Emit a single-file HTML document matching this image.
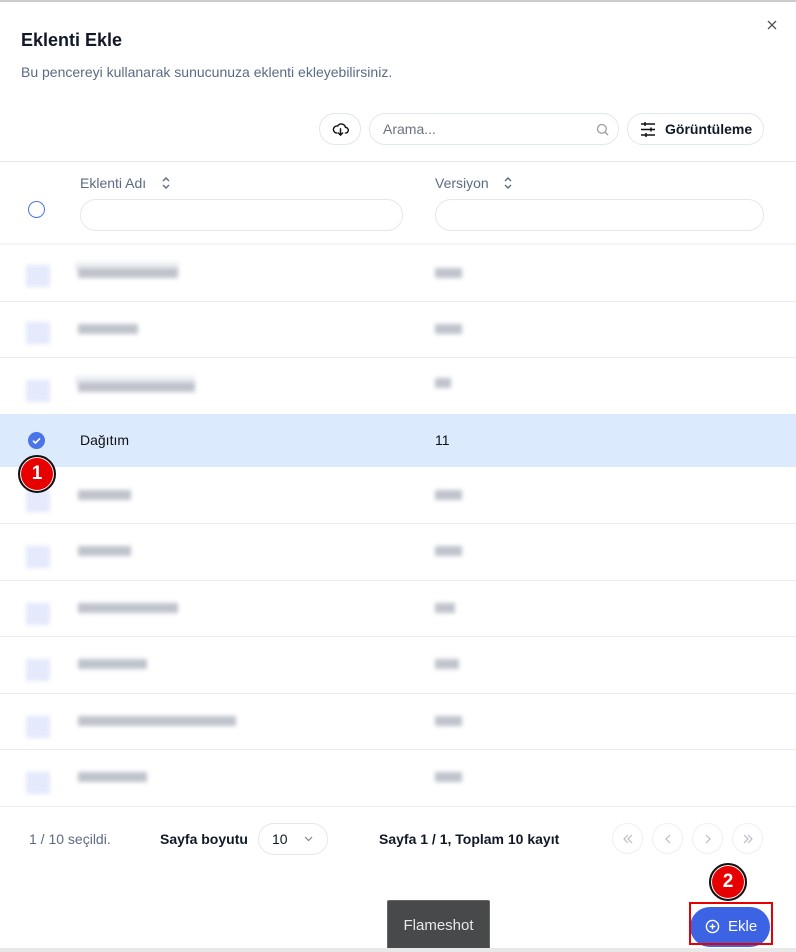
<!DOCTYPE html>
<html><head><meta charset="utf-8"><style>
*{box-sizing:border-box;margin:0;padding:0}
body{width:796px;height:952px;background:#fff;font-family:"Liberation Sans",sans-serif;position:relative;overflow:hidden;color:#111827}
.a{position:absolute}
.t{border-top:2px solid #ccc;top:0;left:0;width:796px}
.pill{border:1px solid #e2e8f0;border-radius:20px;background:#fff}
.row{position:absolute;left:0;width:796px;border-bottom:1px solid #e8edf3}
.bl{position:absolute;height:10px;background:#b4b8c2;filter:blur(2px);opacity:.85}
.bl2{position:absolute;height:8px;background:#eceef1;filter:blur(2px)}
.cb{position:absolute;left:26px;width:24px;height:22px;background:#e4e9fb;filter:blur(2px)}
.nav{position:absolute;top:823px;width:31px;height:31px;border:1px solid #eef0f3;border-radius:50%}
.nav svg{position:absolute;left:9px;top:9px}
.badge{position:absolute;width:38px;height:38px;border-radius:50%;background:#e60000;border:2px solid #111;box-shadow:0 0 0 1px #fff inset;color:#fff;font-weight:bold;font-size:19px;text-align:center;line-height:34px}
</style></head><body>
<div class="a t"></div>
<svg class="a" style="left:767px;top:20px" width="10" height="10" viewBox="0 0 10 10" stroke="#555" stroke-width="1.3"><path d="M1 1l8 8M9 1l-8 8"/></svg>
<div class="a" style="left:21px;top:30px;font-size:18px;font-weight:bold">Eklenti Ekle</div>
<div class="a" style="left:21px;top:64px;font-size:14px;color:#5b6b84">Bu pencereyi kullanarak sunucunuza eklenti ekleyebilirsiniz.</div>

<div class="a pill" style="left:319px;top:113px;width:42px;height:32px"><svg class="a" style="left:12px;top:7px" width="17" height="17" viewBox="0 0 24 24" fill="none" stroke="#111" stroke-width="2" stroke-linecap="round" stroke-linejoin="round"><path d="M7 17a5 5 0 1 1 1-9.9A6 6 0 0 1 19 9a4 4 0 0 1 0 8"/><path d="M12 11v9M9 17l3 3 3-3"/></svg></div>
<div class="a pill" style="left:369px;top:113px;width:250px;height:32px"><span class="a" style="left:13px;top:7px;font-size:14px;color:#6b7280">Arama...</span><svg class="a" style="left:225px;top:8px" width="15" height="15" viewBox="0 0 24 24" fill="none" stroke="#999" stroke-width="2"><circle cx="11" cy="11" r="7"/><path d="M16 16l5 5"/></svg></div>
<div class="a pill" style="left:627px;top:113px;width:137px;height:32px"><svg class="a" style="left:12px;top:8px" width="16" height="15" viewBox="0 0 16 15" stroke="#111" stroke-width="1.5"><path d="M1 2h14M1 7.5h14M1 13h14"/><path d="M5 0v4M11 5.5v4M6 11v4" /></svg><span class="a" style="left:37px;top:7px;font-size:14px;font-weight:bold">Görüntüleme</span></div>

<div class="a" style="left:0;top:161px;width:796px;border-top:1px solid #e5e7eb"></div>
<div class="a" style="left:80px;top:175px;font-size:14px;color:#5b6b84">Eklenti Adı</div>
<svg class="a" style="left:161px;top:176px" width="10" height="14" viewBox="0 0 10 14" fill="none" stroke="#5b6b84" stroke-width="1.4"><path d="M2 5l3-3 3 3M2 9l3 3 3-3"/></svg>
<div class="a" style="left:435px;top:175px;font-size:14px;color:#5b6b84">Versiyon</div>
<svg class="a" style="left:503px;top:176px" width="10" height="14" viewBox="0 0 10 14" fill="none" stroke="#5b6b84" stroke-width="1.4"><path d="M2 5l3-3 3 3M2 9l3 3 3-3"/></svg>
<div class="a" style="left:28px;top:201px;width:17px;height:17px;border:1.5px solid #4a74e8;border-radius:50%"></div>
<div class="a pill" style="left:80px;top:199px;width:323px;height:32px;border-radius:16px"></div>
<div class="a pill" style="left:435px;top:199px;width:329px;height:32px;border-radius:16px"></div>
<div class="a" style="left:0;top:243px;width:796px;height:2px;background:#f3f5f9"></div>

<div class="row" style="top:245px;height:57px"></div>
<div class="row" style="top:302px;height:56px"></div>
<div class="row" style="top:358px;height:57px"></div>
<div class="a" style="left:0;top:414px;width:796px;height:53px;background:#dceafd"></div>
<div class="row" style="top:467px;height:57px"></div>
<div class="row" style="top:524px;height:57px"></div>
<div class="row" style="top:581px;height:56px"></div>
<div class="row" style="top:637px;height:57px"></div>
<div class="row" style="top:694px;height:56px"></div>
<div class="row" style="top:750px;height:57px"></div>

<div class="cb" style="top:265px"></div><div class="bl2" style="left:75px;top:262px;width:104px"></div><div class="bl" style="left:78px;top:268px;width:100px"></div><div class="bl" style="left:435px;top:268px;width:27px"></div>
<div class="cb" style="top:322px"></div><div class="bl" style="left:78px;top:324px;width:60px"></div><div class="bl" style="left:435px;top:324px;width:27px"></div>
<div class="cb" style="top:380px"></div><div class="bl2" style="left:75px;top:376px;width:120px"></div><div class="bl" style="left:78px;top:382px;width:117px"></div><div class="bl" style="left:435px;top:378px;width:16px"></div>
<svg class="a" style="left:28px;top:432px" width="17" height="17" viewBox="0 0 17 17"><circle cx="8.5" cy="8.5" r="8.5" fill="#4a74e8"/><path d="M5 8.7l2.4 2.3 4.6-4.6" stroke="#fff" stroke-width="1.6" fill="none"/></svg>
<div class="a" style="left:80px;top:432px;font-size:14px;color:#111">Dağıtım</div>
<div class="a" style="left:435px;top:432px;font-size:14px;color:#111">11</div>
<div class="cb" style="top:490px"></div><div class="bl" style="left:78px;top:490px;width:53px"></div><div class="bl" style="left:435px;top:490px;width:27px"></div>
<div class="cb" style="top:546px"></div><div class="bl" style="left:78px;top:546px;width:53px"></div><div class="bl" style="left:435px;top:546px;width:27px"></div>
<div class="cb" style="top:603px"></div><div class="bl" style="left:78px;top:603px;width:100px"></div><div class="bl" style="left:435px;top:603px;width:20px"></div>
<div class="cb" style="top:659px"></div><div class="bl" style="left:78px;top:659px;width:69px"></div><div class="bl" style="left:435px;top:659px;width:24px"></div>
<div class="cb" style="top:716px"></div><div class="bl" style="left:78px;top:716px;width:158px"></div><div class="bl" style="left:435px;top:716px;width:27px"></div>
<div class="cb" style="top:772px"></div><div class="bl" style="left:78px;top:772px;width:69px"></div><div class="bl" style="left:435px;top:772px;width:27px"></div>

<div class="a" style="left:29px;top:831px;font-size:14px;color:#5b6b84">1 / 10 seçildi.</div>
<div class="a" style="left:160px;top:831px;font-size:14px;font-weight:bold">Sayfa boyutu</div>
<div class="a pill" style="left:258px;top:823px;width:70px;height:32px;border-radius:16px"><span class="a" style="left:13px;top:7px;font-size:14px">10</span><svg class="a" style="left:45px;top:12px" width="9" height="6" viewBox="0 0 9 6" fill="none" stroke="#888" stroke-width="1.2"><path d="M1 1l3.5 3.5L8 1"/></svg></div>
<div class="a" style="left:379px;top:831px;font-size:14px;font-weight:bold">Sayfa 1 / 1, Toplam 10 kayıt</div>
<div class="nav" style="left:612px"><svg width="12" height="12" viewBox="0 0 12 12" fill="none" stroke="#b6bcc6" stroke-width="1.2"><path d="M6 2L2 6l4 4M10 2L6 6l4 4"/></svg></div>
<div class="nav" style="left:652px"><svg width="12" height="12" viewBox="0 0 12 12" fill="none" stroke="#b6bcc6" stroke-width="1.2"><path d="M8 2L4 6l4 4"/></svg></div>
<div class="nav" style="left:692px"><svg width="12" height="12" viewBox="0 0 12 12" fill="none" stroke="#b6bcc6" stroke-width="1.2"><path d="M4 2l4 4-4 4"/></svg></div>
<div class="nav" style="left:732px"><svg width="12" height="12" viewBox="0 0 12 12" fill="none" stroke="#b6bcc6" stroke-width="1.2"><path d="M2 2l4 4-4 4M6 2l4 4-4 4"/></svg></div>

<div class="a" style="left:387px;top:900px;width:103px;height:52px;background:#48494b;border:1px solid #666;border-radius:2px;color:#e8e8e8;font-size:15px;text-align:center;line-height:50px">Flameshot</div>
<div class="a" style="left:690px;top:907px;width:80px;height:40px;background:#3b63e3;border-radius:20px"></div>
<div class="a" style="left:689px;top:902px;width:84px;height:43px;border:2px solid #e60000"></div>
<svg class="a" style="left:705px;top:919px" width="15" height="15" viewBox="0 0 16 16" fill="none" stroke="#fff" stroke-width="1.5"><circle cx="8" cy="8" r="6.5"/><path d="M8 5v6M5 8h6"/></svg>
<div class="a" style="left:728px;top:918px;font-size:15px;color:#fff">Ekle</div>
<div class="badge" style="left:18px;top:455px">1</div>
<div class="badge" style="left:709px;top:863px">2</div>
<div class="a" style="left:0;top:948px;width:796px;height:4px;background:#e8e8e8"></div>
</body></html>
